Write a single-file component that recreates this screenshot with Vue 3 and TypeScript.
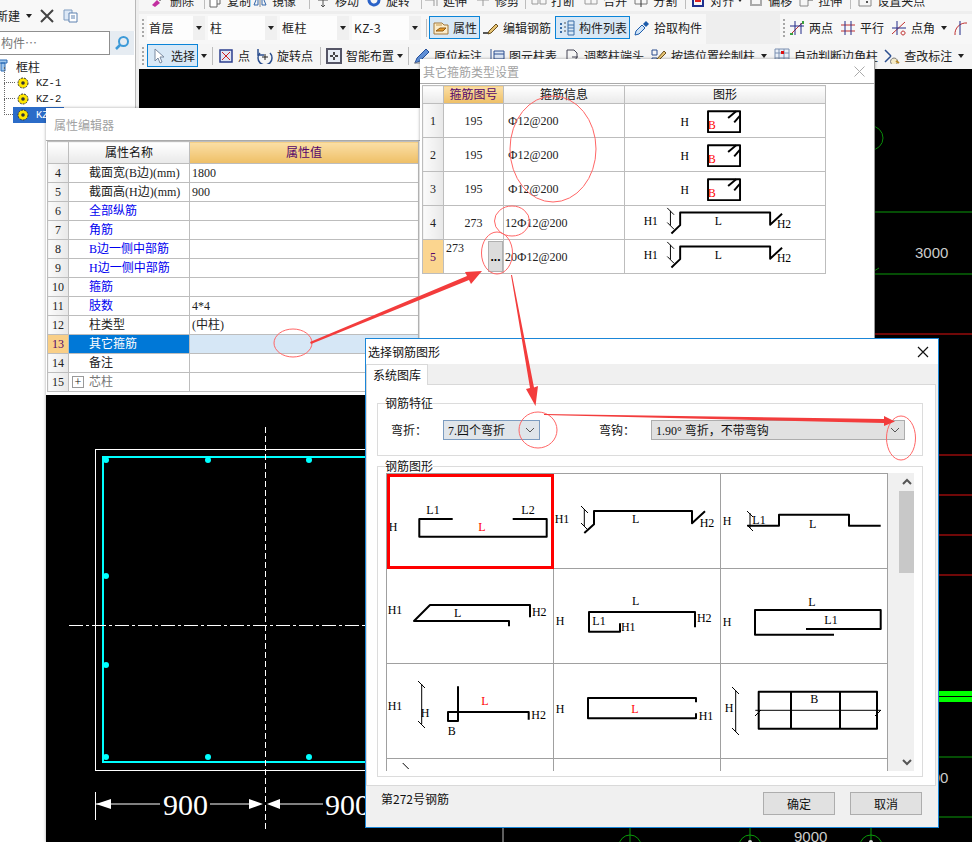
<script setup lang="ts">
import { h } from 'vue'
import type { FunctionalComponent } from 'vue'

interface Stroke { d: string; s?: string; f?: string; w?: number }
interface Label { x: number; y: number; t: string; red?: boolean }
interface Shape { paths: string[]; thin?: string[]; labels: Label[] }
interface Tool { icon?: string; text?: string; ml: number; kind?: 'sep' | 'caret'; active?: boolean; w?: number }

const icons: Record<string, Stroke[]> = {
  del: [{ d: 'M2 13l5-5 3 3-5 4z', f: '#c22fa0' }, { d: 'M8 7l5-5 2 2-5 5z', f: '#333' }],
  copy: [{ d: 'M5 2h8v10H5z', s: '#666' }, { d: 'M3 5h7v10H3z', s: '#666', f: '#fff' }],
  mirror: [{ d: 'M2 13L6 3v10zM14 13L10 3v10z', s: '#3366aa' }, { d: 'M8 1v14', s: '#888' }],
  move: [{ d: 'M8 1v14M3 8h10M6 3l2-2 2 2M6 13l2 2 2-2', s: '#555' }],
  rotate: [{ d: 'M13 8a5 5 0 1 1-2-4', s: '#2a62c8', w: 3 }],
  extend: [{ d: 'M2 8h9M11 2v12M14 2v12', s: '#999' }],
  trim: [{ d: 'M2 8h12M8 2v12', s: '#999' }],
  brk: [{ d: 'M1 4h6v8H1zM9 4h6v8H9z', s: '#999' }],
  join: [{ d: 'M2 4h12v8H2zM8 4v8', s: '#999' }],
  split: [{ d: 'M2 4h12v8H2z', s: '#777' }, { d: 'M8 1v14', s: '#333' }],
  align: [{ d: 'M3 2h10v12H3z', s: '#1d2f8f', w: 2 }, { d: 'M5 9h6', s: '#d22', w: 2 }],
  offset: [{ d: 'M3 3h10v10H3z', s: '#aaa', w: 2 }],
  stretch: [{ d: 'M2 2h8v12H2z', s: '#888' }, { d: 'M10 8h5', s: '#555' }],
  grip: [{ d: 'M2 2h12v12H2z', s: '#888' }, { d: 'M5 5h2v2H5zM9 9h2v2H9z', f: '#555' }],
  prop: [{ d: 'M1 3h8l2 2h4v9H1z', f: '#fbeccb', s: '#a4793a' }, { d: 'M3 11l4-3h6l-3 3z', f: '#e99a26', s: '#8f5b16' }, { d: 'M3 5h6', s: '#c89b4f' }],
  edit: [{ d: 'M0 13h7', s: '#222', w: 1.5 }, { d: 'M6 11l7-7 2 2-7 7-3 1z', f: '#e6c373', s: '#6c5220' }],
  list: [{ d: 'M1 3h2v2H1zM1 7h2v2H1zM1 11h2v2H1z', f: '#3b6ea8' }, { d: 'M5 3h2M5 7h2M5 11h2', s: '#555' }, { d: 'M9 1h6v14H9zM9 5h6M9 8h6M9 11h6', s: '#3b6ea8' }],
  picker: [{ d: 'M1 15l1-4 6-6 3 3-6 6z', f: '#cfe3f7', s: '#1d5cab' }, { d: 'M9 4l3-3 3 3-3 3z', f: '#1d5cab' }],
  twoPt: [{ d: 'M2 14L14 2', s: '#c03030' }, { d: 'M6 1v14M12 3v11', s: '#222a88' }, { d: 'M1 6h14', s: '#222a88' }, { d: 'M1 13h3v2H1zM13 1h2v3h-2z', f: '#3aa040' }],
  para: [{ d: 'M1 5h14M1 11h14', s: '#c03030' }, { d: 'M5 1v14M11 1v14', s: '#222a88' }],
  ptAng: [{ d: 'M1 14L14 2', s: '#c03030' }, { d: 'M6 1v14M1 8h14', s: '#222a88' }, { d: 'M12 11a2 2 0 1 0 .1 0', s: '#c03030' }],
  arc: [{ d: 'M3 15A11 11 0 0 1 15 3', s: '#c03030' }, { d: 'M8 1v14', s: '#222a88' }],
  cursor: [{ d: 'M4 1v12l3-3 2 5 2-1-2-5h4z', f: '#fff', s: '#7a8aa0' }],
  point: [{ d: 'M2 2h12v12H2z', s: '#2c3f8f', f: '#dfe6f5', w: 1.5 }, { d: 'M4 4l8 8M12 4l-8 8', s: '#c22' }],
  rotPt: [{ d: 'M3 5a7 7 0 1 0 10 0', s: '#2c4f8f', w: 1.5 }, { d: 'M1 1v6h6', s: '#2c4f8f', w: 1.5 }, { d: 'M8 6v6M5 9h6', s: '#222' }],
  smart: [{ d: 'M1 1h14v14H1z', s: '#556', f: '#e8eef6', w: 2 }, { d: 'M4 8h3M9 8h3M8 4v3M8 9v3', s: '#111', w: 1.5 }],
  mark: [{ d: 'M1 15l2-5 9-9 3 3-9 9z', f: '#5f8fd6', s: '#244f9a' }, { d: 'M0 15h8', s: '#888' }],
  table: [{ d: 'M2 1v13h13', s: '#2c4f8f' }, { d: 'M5 3h10v8H5zM5 6h10', s: '#2c4f8f', f: '#dbe6f5' }],
  adjust: [{ d: 'M3 2h7l3 3v4l-3 5H3z', s: '#445' }, { d: 'M8 9h6', s: '#445' }],
  wall: [{ d: 'M1 2h5v5H1zM1 10h5v5H1z', s: '#2c4f8f' }, { d: 'M6 11l7-8 2 2-8 8z', f: '#e6c373', s: '#6c5220' }],
  auto: [{ d: 'M1 1h14v14H1zM1 5h14M1 10h14M5 1v14M10 1v14', s: '#7a8fb0', f: '#eaf0f8' }, { d: 'M7 3h3v3H7z', f: '#d11' }],
  check: [{ d: 'M1 2l6 6M1 14l6-6', s: '#2c4f8f', w: 1.5 }, { d: 'M10 10a3.5 3.5 0 1 0 .1 0', s: '#777', f: '#f3eac8' }, { d: 'M12 13l3 2', s: '#b98a2a', w: 2 }]
}

const Icon: FunctionalComponent<{ name: string }> = (props) =>
  h(
    'svg',
    { class: 'ic', width: 16, height: 16, viewBox: '0 0 16 16' },
    (icons[props.name] || []).map((p) =>
      h('path', { d: p.d, fill: p.f || 'none', stroke: p.s || 'none', 'stroke-width': p.w || 1 })
    )
  )

// drawings are written in page coordinates, the viewBox picks the cell out of them
const Draw: FunctionalComponent<{ shape: Shape; box: string }> = (props) =>
  h('svg', { class: 'draw', viewBox: props.box }, [
    ...props.shape.paths.map((d) =>
      h('path', { d, fill: 'none', stroke: '#000', 'stroke-width': 2, 'stroke-linejoin': 'round' })
    ),
    ...(props.shape.thin || []).map((d) => h('path', { d, fill: 'none', stroke: '#000', 'stroke-width': 1 })),
    ...props.shape.labels.map((l) =>
      h(
        'text',
        {
          x: l.x,
          y: l.y + 4,
          fill: l.red ? '#f00' : '#000',
          'font-size': 12,
          'font-family': '"Liberation Serif", serif',
          'text-anchor': 'middle'
        },
        l.t
      )
    )
  ])

const topTools: Tool[] = [
  { icon: 'del', text: '删除', ml: 11 },
  { kind: 'sep', ml: 10 },
  { icon: 'copy', text: '复制', ml: 2 },
  { icon: 'mirror', text: '镜像', ml: 1 },
  { kind: 'sep', ml: 13 },
  { icon: 'move', text: '移动', ml: 5 },
  { icon: 'rotate', text: '旋转', ml: 7 },
  { kind: 'sep', ml: 11 },
  { icon: 'extend', text: '延伸', ml: 1 },
  { icon: 'trim', text: '修剪', ml: 8 },
  { kind: 'sep', ml: 6 },
  { icon: 'brk', text: '打断', ml: 5 },
  { icon: 'join', text: '合并', ml: 8 },
  { icon: 'split', text: '分割', ml: 6 },
  { kind: 'sep', ml: 8 },
  { icon: 'align', text: '对齐', ml: 4 },
  { kind: 'caret', ml: 3 },
  { icon: 'offset', text: '偏移', ml: 5 },
  { icon: 'stretch', text: '拉伸', ml: 6 },
  { kind: 'sep', ml: 8 },
  { icon: 'grip', text: '设置夹点', ml: 6 }
]

const floors = [
  { t: '首层', w: 58, ml: 2 },
  { t: '柱', w: 69, ml: 3 },
  { t: '框柱', w: 69, ml: 3 },
  { t: 'KZ-3', w: 69, ml: 3 }
]

const midTools: Tool[] = [
  { kind: 'sep', ml: 5 },
  { icon: 'prop', text: '属性', ml: 2, active: true, w: 51 },
  { icon: 'edit', text: '编辑钢筋', ml: 3 },
  { icon: 'list', text: '构件列表', ml: 4, active: true, w: 75 },
  { icon: 'picker', text: '拾取构件', ml: 4 }
]

const drawTools: Tool[] = [
  { icon: 'twoPt', text: '两点', ml: 3 },
  { icon: 'para', text: '平行', ml: 7 },
  { icon: 'ptAng', text: '点角', ml: 7 },
  { kind: 'caret', ml: 6 },
  { icon: 'arc', ml: 5 }
]

const placeTools: Tool[] = [
  { icon: 'cursor', text: '选择', ml: 2, active: true, w: 51 },
  { kind: 'caret', ml: 3 },
  { kind: 'sep', ml: 5 },
  { icon: 'point', text: '点', ml: 5 },
  { icon: 'rotPt', text: '旋转点', ml: 7 },
  { kind: 'sep', ml: 7 },
  { icon: 'smart', text: '智能布置', ml: 5 },
  { kind: 'caret', ml: 3 },
  { kind: 'sep', ml: 5 },
  { icon: 'mark', text: '原位标注', ml: 5 },
  { icon: 'table', text: '图元柱表', ml: 7 },
  { icon: 'adjust', text: '调整柱端头', ml: 7 },
  { icon: 'wall', text: '按墙位置绘制柱', ml: 7 },
  { kind: 'caret', ml: 6 },
  { icon: 'auto', text: '自动判断边角柱', ml: 7 },
  { icon: 'check', text: '查改标注', ml: 6 },
  { kind: 'caret', ml: 6 }
]

const treeItems = ['KZ-1', 'KZ-2', 'KZ-3']

const props = [
  { no: 4, name: '截面宽(B边)(mm)', value: '1800' },
  { no: 5, name: '截面高(H边)(mm)', value: '900' },
  { no: 6, name: '全部纵筋', value: '', link: true },
  { no: 7, name: '角筋', value: '', link: true },
  { no: 8, name: 'B边一侧中部筋', value: '', link: true },
  { no: 9, name: 'H边一侧中部筋', value: '', link: true },
  { no: 10, name: '箍筋', value: '', link: true },
  { no: 11, name: '肢数', value: '4*4', link: true },
  { no: 12, name: '柱类型', value: '(中柱)' },
  { no: 13, name: '其它箍筋', value: '', selected: true },
  { no: 14, name: '备注', value: '' },
  { no: 15, name: '芯柱', value: '', group: true }
]

const box = (y: number): Shape => ({
  paths: [
    `M707 ${y + 7.5}H740V${y + 29}H707Z`,
    `M727.7 ${y + 14.5}L736 ${y + 7.5}`,
    `M734 ${y + 19}L740 ${y + 12}`
  ],
  labels: [
    { x: 683, y: y + 18.5, t: 'H' },
    { x: 711, y: y + 22, t: 'B', red: true }
  ]
})

const hook = (y: number): Shape => ({
  paths: [`M669.3 ${y + 28.3}L678.3 ${y + 19.7}V${y + 6.7}H771V${y + 19.3}L783.3 ${y + 8}`],
  thin: [`M668.3 ${y + 5}V${y + 20}M665 ${y + 2}l7 7M665 ${y + 17}l7 7`],
  labels: [
    { x: 648, y: y + 15.3, t: 'H1' },
    { x: 717.7, y: y + 15.3, t: 'L' },
    { x: 785.3, y: y + 18.7, t: 'H2' }
  ]
})

const stirrups = [
  { no: 1, fig: '195', info: 'Ф12@200', pad: true, shape: box(104) },
  { no: 2, fig: '195', info: 'Ф12@200', pad: true, shape: box(138) },
  { no: 3, fig: '195', info: 'Ф12@200', pad: true, shape: box(172) },
  { no: 4, fig: '273', info: '12Ф12@200', shape: hook(206) },
  { no: 5, fig: '273', info: '20Ф12@200', shape: hook(240), editing: true }
]

const catalog: Shape[] = [
  {
    paths: ['M452.7 520H419.3V537.7H546.7V520H512.7'],
    labels: [
      { x: 433, y: 511, t: 'L1' },
      { x: 528, y: 511, t: 'L2' },
      { x: 393, y: 528, t: 'H' },
      { x: 482, y: 528, t: 'L', red: true }
    ]
  },
  {
    paths: ['M584.3 534L594 525.3V512H692V524.3L705 512.3'],
    thin: ['M584.3 510V527M581 507l7 7M581 524l7 7'],
    labels: [
      { x: 562, y: 520, t: 'H1' },
      { x: 635.7, y: 520, t: 'L' },
      { x: 707, y: 524, t: 'H2' }
    ]
  },
  {
    paths: ['M747.3 526.7H779V515.7H849V526.7H880.7'],
    thin: ['M750 514V529M747 512l6 6M747 526l6 6'],
    labels: [
      { x: 727, y: 521.7, t: 'H' },
      { x: 759, y: 521, t: 'L1' },
      { x: 812.7, y: 525, t: 'L' }
    ]
  },
  {
    paths: ['M509 627.3V622H414L430 606H530V618.3'],
    labels: [
      { x: 395, y: 611, t: 'H1' },
      { x: 457.7, y: 614.3, t: 'L' },
      { x: 539.3, y: 613.3, t: 'H2' }
    ]
  },
  {
    paths: ['M620 624.3V632.7H589V613H695V628.3'],
    labels: [
      { x: 560, y: 622, t: 'H' },
      { x: 635.7, y: 602, t: 'L' },
      { x: 599, y: 622.3, t: 'L1' },
      { x: 628.3, y: 628, t: 'H1' },
      { x: 704.3, y: 619, t: 'H2' }
    ]
  },
  {
    paths: ['M806 630H880.7V611H755V635.7H834'],
    labels: [
      { x: 727, y: 622.7, t: 'H' },
      { x: 812, y: 603.3, t: 'L' },
      { x: 831, y: 621, t: 'L1' }
    ]
  },
  {
    paths: ['M458 687.3V722H448V713H528.7V720.7'],
    thin: ['M421.7 685V725M418 682l7 7M418 722l7 7'],
    labels: [
      { x: 395, y: 707, t: 'H1' },
      { x: 425, y: 714, t: 'H' },
      { x: 485, y: 702.3, t: 'L', red: true },
      { x: 538.7, y: 716, t: 'H2' },
      { x: 451.7, y: 732.3, t: 'B' }
    ]
  },
  {
    paths: ['M696 703.3V699H588V719.3H696V714.3'],
    labels: [
      { x: 560, y: 710, t: 'H' },
      { x: 635, y: 710.3, t: 'L', red: true },
      { x: 706, y: 717, t: 'H1' }
    ]
  },
  {
    paths: ['M758.7 692.7H877V729.7H758.7ZM791 692.7V729.7M840 692.7V729.7'],
    thin: ['M755.3 711.3H880.7M755 717l6-6M875 717l6-6M735.7 691.7V733M732 688l7 7M732 729l7 7'],
    labels: [
      { x: 729, y: 709, t: 'H' },
      { x: 814.3, y: 700, t: 'B' }
    ]
  },
  { paths: [], thin: ['M402.7 764l6 6'], labels: [] },
  { paths: [], labels: [] },
  { paths: [], labels: [] }
]

const cellBox = (i: number) => `${387 + 167 * (i % 3)} ${475 + 95 * Math.floor(i / 3)} 166 94`

const dots = [
  [106, 460], [208, 460], [309, 460],
  [106, 576], [106, 665],
  [106, 757], [208, 757], [309, 757]
]
const redLines = [455, 495, 535, 575]
const bottomAxes = [630, 750, 871]
</script>

<template>
  <div class="screen">
    <aside class="tree-panel">
      <div class="tree-head">
        <span class="new">新建</span>
        <i class="caret"></i>
        <svg class="head-ic" width="14" height="14" viewBox="0 0 14 14"><path d="M1 1l12 12M13 1L1 13" stroke="#444" stroke-width="2" /></svg>
        <svg class="head-ic copy" width="16" height="14" viewBox="0 0 16 14"><path d="M1 1h8v10H1z" fill="#dce8f6" stroke="#7f9cc0" /><path d="M6 4h8v9H6z" fill="#fff" stroke="#5f82b0" /><path d="M8 7h4M8 9h4" stroke="#5f82b0" /></svg>
      </div>
      <div class="search">
        <div class="search-input">构件…</div>
        <div class="search-btn">
          <svg width="16" height="16" viewBox="0 0 16 16"><circle cx="9.5" cy="6.5" r="4.5" fill="none" stroke="#3c9ad8" stroke-width="2" /><path d="M6 10l-4 4" stroke="#3c9ad8" stroke-width="2.5" /></svg>
        </div>
      </div>
      <div class="tree">
        <div class="tree-root">
          <svg class="root-ic" width="9" height="14" viewBox="0 0 9 14"><path d="M0 1h8v3H0zM2 4h4v8H2z" fill="#9fc6ec" stroke="#2a6bb5" /></svg>
          <span>框柱</span>
        </div>
        <div v-for="(item, i) in treeItems" :key="item" class="tree-item" :class="{ current: i === 2 }">
          <svg width="12" height="12" viewBox="0 0 12 12"><circle cx="6" cy="6" r="5" fill="#ffe600" stroke="#333" stroke-dasharray="2 1" /><circle cx="6" cy="6" r="1.8" fill="#333" /></svg>
          <span>{{ item }}</span>
        </div>
      </div>
    </aside>

    <main class="work">
      <div class="bar-top">
        <div class="bar-top-in">
          <template v-for="(t, i) in topTools" :key="i">
            <span v-if="t.kind === 'sep'" class="sep" :style="{ marginLeft: t.ml + 'px' }"></span>
            <i v-else-if="t.kind === 'caret'" class="caret" :style="{ marginLeft: t.ml + 'px' }"></i>
            <div v-else class="tool" :style="{ marginLeft: t.ml + 'px' }">
              <Icon :name="t.icon!" /><span>{{ t.text }}</span>
            </div>
          </template>
        </div>
      </div>

      <div class="bar-mid">
        <div class="pill left">
          <span class="grip"></span>
          <div v-for="c in floors" :key="c.t" class="floor" :style="{ width: c.w + 'px', marginLeft: c.ml + 'px' }">
            <span>{{ c.t }}</span>
            <b><i class="caret"></i></b>
          </div>
          <template v-for="(t, i) in midTools" :key="i">
            <span v-if="t.kind === 'sep'" class="sep" :style="{ marginLeft: t.ml + 'px' }"></span>
            <div v-else class="tool" :class="{ active: t.active }" :style="{ marginLeft: t.ml + 'px', width: t.w ? t.w + 'px' : undefined }">
              <Icon :name="t.icon!" /><span>{{ t.text }}</span>
            </div>
          </template>
        </div>
        <div class="pill right">
          <span class="grip"></span>
          <template v-for="(t, i) in drawTools" :key="i">
            <i v-if="t.kind === 'caret'" class="caret" :style="{ marginLeft: t.ml + 'px' }"></i>
            <div v-else class="tool" :style="{ marginLeft: t.ml + 'px' }">
              <Icon :name="t.icon!" /><span v-if="t.text">{{ t.text }}</span>
            </div>
          </template>
        </div>
      </div>

      <div class="bar-place">
        <span class="grip"></span>
        <template v-for="(t, i) in placeTools" :key="i">
          <span v-if="t.kind === 'sep'" class="sep" :style="{ marginLeft: t.ml + 'px' }"></span>
          <i v-else-if="t.kind === 'caret'" class="caret" :style="{ marginLeft: t.ml + 'px' }"></i>
          <div v-else class="tool" :class="{ active: t.active }" :style="{ marginLeft: t.ml + 'px', width: t.w ? t.w + 'px' : undefined }">
            <Icon :name="t.icon!" /><span>{{ t.text }}</span>
          </div>
        </template>
      </div>

      <div class="canvas">
        <svg class="canvas-svg" viewBox="139 69 833 773">
          <circle cx="871" cy="138" r="12" fill="none" stroke="#0a8a0a" />
          <path d="M874 212H972M874 274H972M939 757H972M939 817H972" stroke="#0a9a0a" />
          <path d="M874 271l5-3" stroke="#0a8a0a" />
          <path d="M874 334H972" stroke="#e01010" />
          <path v-for="y in redLines" :key="y" :d="`M939 ${y}H972`" stroke="#e01010" />
          <rect x="939" y="691" width="33" height="5" fill="#00ff00" />
          <rect x="939" y="697" width="33" height="5" fill="#00ff00" />
          <text x="915" y="258" fill="#ccc" font-size="15" font-family="Liberation Sans, sans-serif">3000</text>
          <text x="915" y="783" fill="#ccc" font-size="15" font-family="Liberation Sans, sans-serif">3000</text>
          <text x="794" y="842" fill="#ccc" font-size="15" font-family="Liberation Sans, sans-serif">9000</text>
          <path d="M503 828V842" stroke="#bbb" />
          <g v-for="x in bottomAxes" :key="x">
            <circle :cx="x" cy="846" r="11" fill="none" stroke="#0a9a0a" />
            <path :d="`M${x} 828V842`" stroke="#0a9a0a" />
          </g>
          <circle cx="750" cy="842" r="2" fill="#ddd" />
          <circle cx="871" cy="842" r="2" fill="#ddd" />
        </svg>
      </div>
    </main>

    <!-- 属性编辑器 -->
    <section class="win prop-win">
      <div class="win-title">属性编辑器</div>
      <div class="prop-body">
        <table class="grid-table">
          <colgroup><col class="c-no" /><col class="c-name" /><col class="c-value" /></colgroup>
          <thead>
            <tr>
              <th class="corner"></th>
              <th>属性名称</th>
              <th class="hot">属性值</th>
            </tr>
          </thead>
          <tbody>
            <tr v-for="p in props" :key="p.no" :class="{ selected: p.selected }">
              <td class="row-no">{{ p.no }}</td>
              <td class="name" :class="{ link: p.link, group: p.group }">
                <span v-if="p.group" class="plus">+</span>{{ p.name }}
              </td>
              <td class="value">{{ p.value }}</td>
            </tr>
          </tbody>
        </table>
      </div>
      <div class="preview">
        <svg viewBox="46 395 374 447" class="preview-svg">
          <rect x="95.5" y="449.5" width="400" height="321" fill="none" stroke="#fff" />
          <rect x="103" y="457" width="400" height="305" fill="none" stroke="#00ffff" stroke-width="2" />
          <circle v-for="d in dots" :key="d.join()" :cx="d[0]" :cy="d[1]" r="3" fill="#00ffff" />
          <path d="M69 625.5H420" stroke="#fff" stroke-dasharray="14 3 3 3" />
          <path d="M265.5 427V832" stroke="#fff" stroke-dasharray="6 3" />
          <path d="M95.5 792V820M96 804H160M210 804H250M280 804H323" stroke="#fff" />
          <path d="M96 804l15-5v10zM263 804l-14-5v10zM267 804l13-5v10z" fill="#fff" />
          <text x="163" y="815" class="dim">900</text>
          <text x="325" y="815" class="dim">900</text>
        </svg>
      </div>
    </section>

    <!-- 其它箍筋类型设置 -->
    <section class="win stirrup-win">
      <div class="win-title">
        <span>其它箍筋类型设置</span>
        <svg width="11" height="11" viewBox="0 0 11 11"><path d="M.5.5l10 10M10.5.5l-10 10" stroke="#aaa" /></svg>
      </div>
      <div class="stirrup-body">
        <table class="grid-table stirrup-table">
          <colgroup><col class="s-no" /><col class="s-fig" /><col class="s-info" /><col class="s-shape" /></colgroup>
          <thead>
            <tr>
              <th class="corner"></th>
              <th class="hot">箍筋图号</th>
              <th>箍筋信息</th>
              <th>图形</th>
            </tr>
          </thead>
          <tbody>
            <tr v-for="(r, i) in stirrups" :key="r.no">
              <td class="row-no" :class="{ marked: r.editing }">{{ r.no }}</td>
              <td v-if="r.editing" class="fig-edit">
                <div class="fig-edit-in"><span>{{ r.fig }}</span><button class="dots">...</button></div>
              </td>
              <td v-else class="fig">{{ r.fig }}</td>
              <td class="info" :class="{ indent: r.pad }">{{ r.info }}</td>
              <td class="shape"><Draw :shape="r.shape" :box="`624 ${104 + 34 * i} 201 34`" /></td>
            </tr>
          </tbody>
        </table>
      </div>
    </section>

    <!-- 选择钢筋图形 -->
    <section class="dialog">
      <div class="dlg-title">
        <span>选择钢筋图形</span>
        <svg width="12" height="12" viewBox="0 0 12 12"><path d="M1 1l10 10M11 1L1 11" stroke="#111" stroke-width="1.2" /></svg>
      </div>
      <div class="tabs"><div class="tab">系统图库</div></div>
      <div class="tab-page">
        <fieldset class="group">
          <legend>钢筋特征</legend>
          <div class="feature-row">
            <label class="lb lb-a">弯折：</label>
            <div class="select hot-select">
              <span>7.四个弯折</span>
              <svg width="10" height="6" viewBox="0 0 10 6"><path d="M1 1l4 4 4-4" fill="none" stroke="#555" /></svg>
            </div>
            <label class="lb lb-b">弯钩：</label>
            <div class="select wide-select">
              <span>1.90° 弯折，不带弯钩</span>
              <svg width="10" height="6" viewBox="0 0 10 6"><path d="M1 1l4 4 4-4" fill="none" stroke="#555" /></svg>
            </div>
          </div>
        </fieldset>
        <fieldset class="group shapes-group">
          <legend>钢筋图形</legend>
          <div class="shape-list">
            <div class="shape-grid">
              <div v-for="(s, i) in catalog" :key="i" class="cell" :class="{ picked: i === 0 }">
                <Draw :shape="s" :box="cellBox(i)" />
              </div>
            </div>
            <div class="gutter"></div>
            <div class="scrollbar">
              <svg width="16" height="18" viewBox="0 0 16 18"><path d="M4 11l4-4 4 4" fill="none" stroke="#555" stroke-width="2" /></svg>
              <div class="thumb"></div>
              <div class="track"></div>
              <svg width="16" height="18" viewBox="0 0 16 18"><path d="M4 7l4 4 4-4" fill="none" stroke="#555" stroke-width="2" /></svg>
            </div>
          </div>
        </fieldset>
      </div>
      <div class="dlg-foot">
        <span class="status">第272号钢筋</span>
        <button class="btn">确定</button>
        <button class="btn">取消</button>
      </div>
    </section>

    <!-- 截图上的手工标注 -->
    <svg class="notes" viewBox="0 0 972 842">
      <g fill="none" stroke="#f66" stroke-width="1">
        <ellipse cx="293" cy="343" rx="19" ry="14" />
        <ellipse cx="553" cy="149" rx="43" ry="53" />
        <ellipse cx="512" cy="221" rx="17.5" ry="15" />
        <ellipse cx="497" cy="253" rx="15.5" ry="21" />
        <ellipse cx="538" cy="430" rx="19" ry="18" />
        <ellipse cx="901" cy="438" rx="14.5" ry="22" />
      </g>
      <g fill="#f33c3c">
        <path d="M310 342L467 276L465 272L482 271L471 284L469 280L311 344Z" />
        <path d="M511 275L530 388L526 389L535.5 406L538 386L534 387.5L512 275Z" />
        <path d="M544 414L884 419L884 416L895 421.5L884 426L884 423L544 415Z" />
      </g>
    </svg>
  </div>
</template>

<style scoped>
.screen {
  position: relative;
  display: flex;
  width: 972px;
  height: 842px;
  overflow: hidden;
  background: #eeeeee;
  font-family: "Noto Sans CJK SC", "Liberation Sans", sans-serif;
  font-size: 12px;
  color: #222;
}

.caret {
  display: inline-block;
  flex: none;
  width: 0;
  height: 0;
  border-left: 3.5px solid transparent;
  border-right: 3.5px solid transparent;
  border-top: 4px solid #222;
}

/* left tree */
.tree-panel {
  flex: none;
  width: 135px;
  margin-right: 3px;
  background: #fff;
  border-right: 1px solid #b8b8b8;
  box-sizing: content-box;
}

.tree-head {
  display: flex;
  align-items: center;
  height: 31px;
  background: #f8f8f8;
}

.new {
  margin-left: -4px;
  font-size: 12px;
}

.tree-head .caret {
  margin-left: 6px;
  margin-top: 1px;
}

.head-ic {
  margin-left: 8px;
}

.head-ic.copy {
  margin-left: 9px;
}

.search {
  display: flex;
  height: 24px;
}

.search-input {
  width: 111px;
  margin-left: -1px;
  padding-left: 1px;
  box-sizing: border-box;
  border: 1px solid #8f8f8f;
  color: #777;
  line-height: 21px;
}

.search-btn {
  display: flex;
  align-items: center;
  justify-content: center;
  width: 24px;
  background: #e6ecf2;
}

.tree {
  padding-top: 2px;
}

.tree-root {
  display: flex;
  align-items: center;
  height: 18px;
  padding-left: 0;
  gap: 8px;
}

.root-ic {
  margin-left: -1px;
}

.tree-item {
  position: relative;
  display: flex;
  align-items: center;
  gap: 7px;
  height: 16px;
  padding-left: 17px;
  font-family: "Liberation Mono", monospace;
  font-size: 10.5px;
}

.tree-item::before {
  content: "";
  position: absolute;
  left: 4px;
  top: -8px;
  width: 10px;
  height: 15px;
  border-left: 1px dotted #666;
  border-bottom: 1px dotted #666;
}

.tree-item.current {
  color: #fff;
}

.tree-item.current::after {
  content: "";
  position: absolute;
  z-index: 0;
  left: 13px;
  top: 0;
  width: 51px;
  height: 16px;
  background: #2b6cc8;
}

.tree-item svg,
.tree-item span {
  position: relative;
  z-index: 1;
}

/* toolbars */
.work {
  flex: 1;
  min-width: 0;
  display: flex;
  flex-direction: column;
}

.tool {
  display: flex;
  align-items: center;
  flex: none;
  gap: 4px;
  box-sizing: border-box;
  white-space: nowrap;
}

.tool.active {
  height: 23px;
  padding-left: 3px;
  border: 1px solid #0a84d8;
  background: #d8e8f6;
}

.sep {
  flex: none;
  width: 1px;
  height: 18px;
  background: #bdbdbd;
}

.grip {
  flex: none;
  width: 0;
  height: 18px;
  margin-left: 3px;
  margin-right: 1px;
  border-left: 2px dotted #a8a8a8;
}

.bar-top {
  flex: none;
  height: 11px;
  margin-bottom: 3px;
  overflow: hidden;
  background: #f6f6f6;
}

.bar-top-in {
  display: flex;
  align-items: center;
  height: 22px;
  margin-top: -11px;
}

.bar-mid {
  flex: none;
  display: flex;
  height: 30px;
}

.pill {
  display: flex;
  align-items: center;
  height: 27px;
  padding-bottom: 3px;
  background: #f7f7f7;
}

.pill.left {
  width: 567px;
}

.pill.right {
  flex: 1;
  margin-left: 74px;
}

.floor {
  display: flex;
  align-items: center;
  justify-content: space-between;
  flex: none;
  height: 24px;
  padding-left: 2px;
  box-sizing: border-box;
  background: #fdfdfd;
  letter-spacing: 0.4px;
}

.floor b {
  display: flex;
  align-items: center;
  justify-content: center;
  width: 12px;
  height: 100%;
  background: #f0f0f0;
}

.bar-place {
  flex: none;
  display: flex;
  align-items: center;
  height: 23px;
  padding-bottom: 2px;
  background: #f5f5f5;
}

.canvas {
  flex: 1;
  min-height: 0;
  background: #000;
}

.canvas-svg {
  display: block;
  width: 833px;
  height: 773px;
}

/* windows */
.win {
  position: absolute;
  background: #fff;
  box-shadow: 0 0 3px rgba(0, 0, 0, 0.35);
}

.win-title {
  display: flex;
  align-items: center;
  justify-content: space-between;
  box-sizing: border-box;
  color: #a2a2a2;
  border-bottom: 1px solid #aaa;
}

.prop-win {
  left: 46px;
  top: 108px;
  width: 374px;
  height: 734px;
  display: flex;
  flex-direction: column;
}

.prop-win .win-title {
  height: 33px;
  padding-left: 8px;
}

.prop-body {
  flex: none;
  height: 254px;
  padding-left: 1px;
  box-sizing: border-box;
}

.grid-table {
  width: 372px;
  table-layout: fixed;
  border-collapse: collapse;
  font-family: "Liberation Serif", "Noto Sans CJK SC", serif;
  font-size: 12px;
}

.c-no { width: 21px; }
.c-name { width: 121px; }

.grid-table th,
.grid-table td {
  height: 19px;
  padding: 0;
  box-sizing: border-box;
  border: 1px solid #bdbdbd;
  font-weight: 400;
  white-space: nowrap;
  overflow: hidden;
  line-height: 14px;
}

.grid-table th {
  height: 22px;
  font-size: 12px;
  color: #111;
  background: linear-gradient(#fff, #e9e9e9);
}

.grid-table th.hot {
  color: #55066b;
  background: linear-gradient(#fbdfa6, #eebf66);
}

.row-no {
  text-align: center;
  background: linear-gradient(90deg, #fbfbfb, #e8e8e8);
  color: #222;
}

.name {
  padding-left: 20px !important;
}

.name.link {
  color: #0000f0;
}

.name.group {
  padding-left: 3px !important;
  color: #777;
}

.plus {
  display: inline-block;
  width: 10px;
  height: 10px;
  margin-right: 5px;
  border: 1px solid #999;
  color: #111;
  line-height: 10px;
  text-align: center;
}

.value {
  padding-left: 2px !important;
}

.selected .row-no {
  background: #f9cf87;
  color: #55066b;
}

.selected .name {
  background: #0078d7;
  color: #fff;
}

.selected .value {
  background: #d6e7f6;
}

.preview {
  flex: 1;
  min-height: 0;
  background: #000;
}

.preview-svg {
  display: block;
  width: 374px;
  height: 447px;
}

.dim {
  fill: #fff;
  font-family: "Liberation Serif", serif;
  font-size: 30px;
}

.stirrup-win {
  left: 420px;
  top: 59px;
  width: 454px;
  height: 290px;
  border-right: 1px solid #999;
}

.stirrup-win .win-title {
  height: 25px;
  padding: 0 9px 0 3px;
}

.stirrup-body {
  padding: 1px 0 0 2px;
}

.stirrup-table {
  width: 404px;
}

.s-no { width: 21px; }
.s-fig { width: 60px; }
.s-info { width: 121px; }

.stirrup-table th {
  height: 18px;
}

.stirrup-table td {
  height: 34px;
}

.fig {
  text-align: center;
}

.info {
  padding-left: 1px !important;
}

.info.indent {
  padding-left: 4px !important;
}

.marked {
  background: #fbd58f;
  color: #55066b;
}

.fig-edit-in {
  display: flex;
  justify-content: space-between;
  height: 31px;
  padding: 0 0 0 2px;
}

.dots {
  width: 15px;
  height: 31px;
  padding: 0;
  border: 1px solid #b0b0b0;
  background: #dcdcdc;
  font-family: "Liberation Sans", sans-serif;
  font-size: 12px;
  font-weight: 700;
  line-height: 22px;
}

.shape {
  overflow: visible;
}

.draw {
  display: block;
  width: 100%;
  height: 100%;
}

/* dialog */
.dialog {
  position: absolute;
  left: 365px;
  top: 338px;
  width: 574px;
  height: 490px;
  box-sizing: border-box;
  display: flex;
  flex-direction: column;
  border: 1px solid #1a86d8;
  background: #f0f0f0;
  color: #111;
}

.dlg-title {
  flex: none;
  display: flex;
  align-items: center;
  justify-content: space-between;
  height: 25px;
  padding: 0 9px 0 2px;
  background: #fff;
}

.tabs {
  flex: none;
  height: 20px;
  padding-top: 0;
}

.tab {
  position: relative;
  z-index: 1;
  width: 62px;
  height: 21px;
  box-sizing: border-box;
  border: 1px solid #d9d9d9;
  border-bottom: 0;
  background: #fff;
  text-align: center;
  line-height: 19px;
}

.tab-page {
  flex: none;
  height: 402px;
  width: 570px;
  box-sizing: border-box;
  padding: 11px 0 0 10px;
  border: 1px solid #d9d9d9;
  background: #fff;
}

.group {
  width: 546px;
  min-width: 0;
  margin: 0;
  padding: 10px 8px 15px;
  box-sizing: border-box;
  border: 1px solid #dcdcdc;
}

.group legend {
  margin-left: -1px;
  padding: 0;
  font-size: 12px;
  line-height: 14px;
}

.feature-row {
  display: flex;
  align-items: center;
  font-family: "Liberation Serif", "Noto Sans CJK SC", serif;
}

.lb-a {
  width: 52px;
  margin-left: 5px;
}

.lb-b {
  width: 52px;
  margin-left: 59px;
}

.select {
  display: flex;
  align-items: center;
  justify-content: space-between;
  height: 20px;
  box-sizing: border-box;
  padding: 0 4px 0 4px;
}

.hot-select {
  width: 97px;
  border: 1px solid #7c9cc0;
  background: #e0e5ea;
}

.wide-select {
  width: 254px;
  border: 1px solid #adadad;
  background: #e1e1e1;
}

.shapes-group {
  margin-top: 3px;
  height: 318px;
  padding: 0 8px 6px;
}

.shape-list {
  display: flex;
  height: 298px;
  overflow: hidden;
}

.shape-grid {
  flex: none;
  display: grid;
  grid-template-columns: repeat(3, 167px);
  grid-auto-rows: 95px;
  border-left: 1px solid #a0a0a0;
  border-top: 1px solid #a0a0a0;
}

.cell {
  box-sizing: border-box;
  width: 167px;
  height: 95px;
  border-right: 1px solid #a0a0a0;
  border-bottom: 1px solid #a0a0a0;
}

.cell.picked {
  outline: 3px solid #f00;
  outline-offset: -3px;
}

.gutter {
  flex: none;
  width: 11px;
  background: #f0f0f0;
}

.scrollbar {
  flex: none;
  width: 16px;
  display: flex;
  flex-direction: column;
  background: #f0f0f0;
}

.thumb {
  flex: none;
  height: 82px;
  background: #c8c8c8;
}

.track {
  flex: 1;
}

.dlg-foot {
  flex: 1;
  display: flex;
  align-items: flex-start;
  padding: 6px 16px 0 15px;
}

.status {
  margin-right: auto;
  line-height: 14px;
}

.btn {
  width: 72px;
  height: 23px;
  margin-left: 15px;
  padding: 0;
  border: 1px solid #adadad;
  background: #e1e1e1;
  color: #111;
  font: inherit;
}

.notes {
  position: absolute;
  left: 0;
  top: 0;
  width: 972px;
  height: 842px;
  pointer-events: none;
}
</style>

<style>
html,
body {
  margin: 0;
  background: #000;
}
</style>
